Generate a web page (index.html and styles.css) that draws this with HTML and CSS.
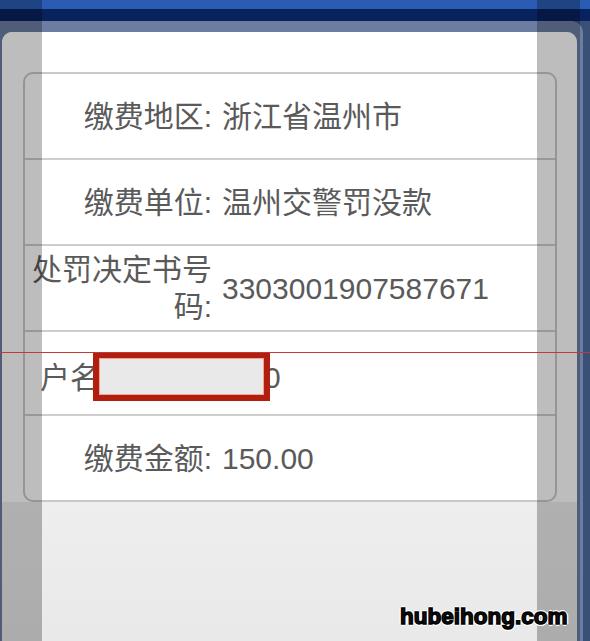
FILE: index.html
```html
<!DOCTYPE html>
<html lang="zh-CN">
<head>
  <meta charset="UTF-8" />
  <title>缴费确认</title>
  <link rel="stylesheet" href="styles.css">
</head>
<body>
  <div class="topbar"></div>
  <div class="navbar"></div>

  <div class="frame">
    <div class="sheet">
      <div class="sheet-top">
        <div class="card">
          <div class="row">
            <div class="label">缴费地区:</div>
            <div class="value">浙江省温州市</div>
          </div>
          <div class="row">
            <div class="label">缴费单位:</div>
            <div class="value">温州交警罚没款</div>
          </div>
          <div class="row">
            <div class="label">处罚决定书号码:</div>
            <div class="value">3303001907587671</div>
          </div>
          <div class="row row-name">
            <span>户名</span>
            <span class="name-hidden"></span>
            <span>0</span>
            <!-- covered part of the name -->
            <div class="redact"></div>
          </div>
          <div class="row">
            <div class="label">缴费金额:</div>
            <div class="value">150.00</div>
          </div>
        </div>
      </div>
      <div class="sheet-foot"></div>
    </div>
  </div>

  <!-- overlays on top of the photo -->
  <div class="band band-left"></div>
  <div class="band band-right"></div>
  <div class="guide-line"></div>
  <div class="watermark">hubeihong.com</div>
</body>
</html>
```

FILE: styles.css
```css
html, body {
  height: 641px;
}

body {
  margin: 0;
  position: relative;
  overflow: hidden;
  background: #3b5077;
  font-family: "Liberation Sans", "Noto Sans CJK SC", sans-serif;
  color: #5a5a5a;
  display: flex;
  flex-direction: column;
}

.topbar {
  height: 9px;
  background: #2b5cb3;
}

.navbar {
  height: 12px;
  background: #07225c;
}

.frame {
  flex: 1;
  margin-right: 7px;
  padding: 11px 6px 0 2px;
  background: #6b7ea2;
  border-radius: 0 12px 0 0;
  display: flex;
}

.sheet {
  flex: 1;
  display: flex;
  flex-direction: column;
  background: #ececec;
  border-radius: 10px 10px 0 0;
  overflow: hidden;
}

.sheet-top {
  background: #fff;
  padding: 40px 20px 0 21px;
}

.sheet-foot {
  flex: 1;
  background: linear-gradient(#eeeeee, #e9e9e9);
}

.card {
  background: #fff;
  border: 2px solid #c9c9c9;
  border-radius: 10px;
}

.row {
  position: relative;
  height: 84px;
  display: flex;
  align-items: center;
  font-size: 30px;
  line-height: 37px;
}

.row + .row {
  border-top: 2px solid #cdcdcd;
}

.label {
  width: 187px;
  flex-shrink: 0;
  text-align: right;
}

.value {
  margin-left: 10px;
}

.row-name {
  padding: 8px 0 0 15px;
  box-sizing: border-box;
}

.name-hidden {
  width: 164px;
}

.redact {
  position: absolute;
  left: 68px;
  top: 20px;
  width: 165px;
  height: 37px;
  background: #e9e9e9;
  border: 6px solid #b01f10;
  box-shadow: inset 0 0 0 1px #f3a58f;
}

.band {
  position: absolute;
  top: 0;
  height: 100%;
  background: rgba(0, 0, 0, 0.26);
}

.band-left {
  left: 0;
  width: 42px;
}

.band-right {
  left: 537px;
  width: 43px;
}

.guide-line {
  position: absolute;
  left: 0;
  right: 0;
  top: 352px;
  height: 1px;
  background: #c23a36;
}

.watermark {
  position: absolute;
  left: 400px;
  top: 606px;
  font-family: "Liberation Sans", sans-serif;
  font-weight: bold;
  font-size: 22.5px;
  line-height: 1;
  color: #111;
  -webkit-text-stroke: 1.4px #000;
  text-shadow: 1px 1px 0 #fff, -1px -1px 0 #fff, 1px -1px 0 #fff, -1px 1px 0 #fff,
    2px 0 0 #fff, -2px 0 0 #fff, 0 2px 0 #fff, 0 -2px 0 #fff;
}
```
